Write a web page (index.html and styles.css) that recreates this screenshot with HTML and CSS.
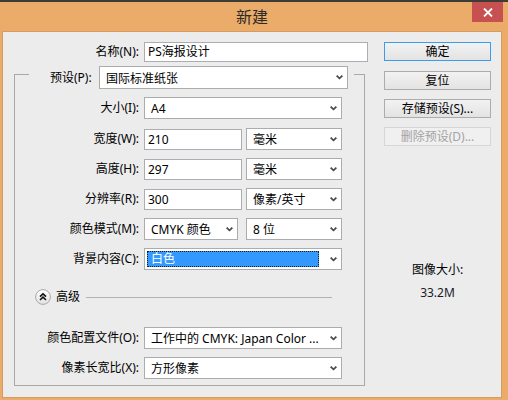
FILE: index.html
```
<!DOCTYPE html>
<html lang="zh-CN">
<head>
<meta charset="utf-8">
<title>新建</title>
<link rel="stylesheet" href="styles.css">
</head>
<body>
<div class="window">
  <div class="titlebar">
    <span class="title">新建</span>
    <div class="close">
      <svg width="10" height="9" viewBox="0 0 10 9"><path d="M1 0.5 L9 8.5 M9 0.5 L1 8.5" stroke="#fff" stroke-width="1.8" fill="none"/></svg>
    </div>
  </div>
  <div class="content">
    <div class="left">
      <div class="name-row">
        <span class="label">名称(N):</span>
        <div class="input">PS海报设计</div>
      </div>
      <div class="group">
        <div class="group-head">
          <span class="head-label">预设(P):</span>
          <div class="select preset"><span class="val">国际标准纸张</span><svg class="chev" width="7" height="5" viewBox="0 0 7 5"><polygon points="0,1.2 1.3,0 3.5,2.2 5.7,0 7,1.2 3.5,4.6" fill="#4a4a4a"/></svg></div>
        </div>
        <div class="row row-size">
          <span class="label">大小(I):</span>
          <div class="select span2"><span class="val">A4</span><svg class="chev" width="7" height="5" viewBox="0 0 7 5"><polygon points="0,1.2 1.3,0 3.5,2.2 5.7,0 7,1.2 3.5,4.6" fill="#4a4a4a"/></svg></div>
        </div>
        <div class="row">
          <span class="label">宽度(W):</span>
          <div class="input num">210</div>
          <div class="select"><span class="val">毫米</span><svg class="chev" width="7" height="5" viewBox="0 0 7 5"><polygon points="0,1.2 1.3,0 3.5,2.2 5.7,0 7,1.2 3.5,4.6" fill="#4a4a4a"/></svg></div>
        </div>
        <div class="row">
          <span class="label">高度(H):</span>
          <div class="input num">297</div>
          <div class="select"><span class="val">毫米</span><svg class="chev" width="7" height="5" viewBox="0 0 7 5"><polygon points="0,1.2 1.3,0 3.5,2.2 5.7,0 7,1.2 3.5,4.6" fill="#4a4a4a"/></svg></div>
        </div>
        <div class="row">
          <span class="label">分辨率(R):</span>
          <div class="input num">300</div>
          <div class="select"><span class="val">像素/英寸</span><svg class="chev" width="7" height="5" viewBox="0 0 7 5"><polygon points="0,1.2 1.3,0 3.5,2.2 5.7,0 7,1.2 3.5,4.6" fill="#4a4a4a"/></svg></div>
        </div>
        <div class="row">
          <span class="label">颜色模式(M):</span>
          <div class="select mode"><span class="val">CMYK 颜色</span><svg class="chev" width="7" height="5" viewBox="0 0 7 5"><polygon points="0,1.2 1.3,0 3.5,2.2 5.7,0 7,1.2 3.5,4.6" fill="#4a4a4a"/></svg></div>
          <div class="select"><span class="val">8 位</span><svg class="chev" width="7" height="5" viewBox="0 0 7 5"><polygon points="0,1.2 1.3,0 3.5,2.2 5.7,0 7,1.2 3.5,4.6" fill="#4a4a4a"/></svg></div>
        </div>
        <div class="row">
          <span class="label">背景内容(C):</span>
          <div class="select span2 focused"><span class="selection">白色</span><svg class="chev" width="7" height="5" viewBox="0 0 7 5"><polygon points="0,1.2 1.3,0 3.5,2.2 5.7,0 7,1.2 3.5,4.6" fill="#4a4a4a"/></svg></div>
        </div>
        <div class="advanced">
          <svg class="adv-icon" width="16" height="16" viewBox="0 0 16 16">
            <defs><linearGradient id="g" x1="0" y1="0" x2="0" y2="1"><stop offset="0" stop-color="#ffffff"/><stop offset="1" stop-color="#e2e2e2"/></linearGradient></defs>
            <circle cx="8" cy="8" r="7.4" fill="url(#g)" stroke="#a8a8a8" stroke-width="1"/>
            <path d="M5 7.6 L8 4.8 L11 7.6 M5 11 L8 8.2 L11 11" stroke="#111" stroke-width="1.6" fill="none"/>
          </svg>
          <span class="adv-text">高级</span>
          <span class="adv-line"></span>
        </div>
        <div class="row row-profile">
          <span class="label">颜色配置文件(O):</span>
          <div class="select span2"><span class="val">工作中的 CMYK: Japan Color ...</span><svg class="chev" width="7" height="5" viewBox="0 0 7 5"><polygon points="0,1.2 1.3,0 3.5,2.2 5.7,0 7,1.2 3.5,4.6" fill="#4a4a4a"/></svg></div>
        </div>
        <div class="row">
          <span class="label">像素长宽比(X):</span>
          <div class="select span2"><span class="val">方形像素</span><svg class="chev" width="7" height="5" viewBox="0 0 7 5"><polygon points="0,1.2 1.3,0 3.5,2.2 5.7,0 7,1.2 3.5,4.6" fill="#4a4a4a"/></svg></div>
        </div>
      </div>
    </div>
    <div class="right">
      <div class="btn default">确定</div>
      <div class="btn b2">复位</div>
      <div class="btn b3">存储预设(S)...</div>
      <div class="btn b3 disabled">删除预设(D)...</div>
      <div class="size-label">图像大小:</div>
      <div class="size-value">33.2M</div>
    </div>
  </div>
</div>
</body>
</html>
```
FILE: styles.css
```
* { box-sizing: border-box; }
html, body {
  margin: 0;
  padding: 0;
}
body {
  width: 508px;
  height: 400px;
  overflow: hidden;
  background: #EBAC6A;
  font-family: "Noto Sans", "Noto Sans CJK SC", sans-serif;
  font-size: 12px;
  color: #000;
}
.window {
  display: flex;
  flex-direction: column;
  height: 400px;
}
.titlebar {
  height: 31px;
  border-top: 2px solid #3f3b37;
  display: grid;
  grid-template-columns: 1fr auto 1fr;
  align-items: start;
}
.title {
  grid-column: 2;
  font-family: "Noto Sans CJK SC", sans-serif;
  font-size: 16px;
  line-height: 29px;
  color: #2b2b2b;
  padding-right: 4px;
}
.close {
  grid-column: 3;
  justify-self: end;
  width: 31px;
  height: 20px;
  margin-right: 5px;
  background: #C75050;
  display: flex;
  align-items: center;
  justify-content: center;
}
.content {
  flex: 1;
  margin: 0 6px 2px 2px;
  background: #ECECEC;
  border: 1px solid #D49C60;
  padding: 10px 0 0 11px;
  display: flex;
}
.left {
  width: 354px;
}
.label {
  font-family: "Noto Sans", "Noto Sans CJK SC", sans-serif;
  text-align: right;
  white-space: nowrap;
  line-height: 16px;
}
.name-row {
  display: grid;
  grid-template-columns: 125px 224px;
  column-gap: 5px;
  height: 20px;
  align-items: center;
}
.input {
  background: #fff;
  border: 1px solid #ABADB3;
  height: 20px;
  line-height: 18px;
  padding-left: 3px;
  white-space: nowrap;
}
.input.num {
  height: 21px;
  line-height: 19px;
}
.select {
  background: #fff;
  border: 1px solid #ACACAC;
  height: 22px;
  display: flex;
  align-items: center;
  padding: 0 4px 0 6px;
  white-space: nowrap;
}
.select .val {
  flex: 1;
  overflow: hidden;
}
.chev {
  flex: none;
  margin-left: 4px;
}
.group {
  margin-top: 12px;
  width: 351px;
  border: 1px solid #A9A9A9;
  padding-bottom: 6px;
}
.group-head {
  margin: -9px 0 0 14px;
  width: fit-content;
  background: #ECECEC;
  display: flex;
  align-items: center;
  padding: 0 6px 0 21px;
}
.head-label {
  width: 44px;
  margin-right: 5px;
  white-space: nowrap;
  line-height: 16px;
}
.select.preset {
  width: 249px;
  height: 23px;
}
.row {
  display: grid;
  grid-template-columns: 125px 98px 96px;
  column-gap: 4px;
  height: 22px;
  align-items: center;
  margin-top: 8px;
}
.row .label {
  padding-right: 1px;
}
.row-size { margin-top: 8px; }
.row-size + .row { margin-top: 9px; }
.span2 { grid-column: 2 / 4; }
.select.mode {
  width: 94px;
}
.select.focused {
  padding: 0 4px 0 2px;
}
.selection {
  flex: 1;
  height: 16px;
  line-height: 16px;
  background: #3399FF;
  color: #fff;
  padding-left: 4px;
  outline: 1px dotted #1a1a1a;
  outline-offset: -1px;
  margin-right: 11px;
}
.focused .chev { margin-left: 0; }
.advanced {
  display: flex;
  align-items: center;
  height: 16px;
  margin-top: 19px;
  padding-left: 20px;
  padding-right: 32px;
}
.adv-icon { flex: none; }
.adv-text {
  margin-left: 5px;
  font-size: 12px;
  line-height: 16px;
}
.adv-line {
  flex: 1;
  height: 1px;
  background: #B2B2B2;
  margin-left: 6px;
}
.row-profile { margin-top: 22px; }
.right {
  margin-left: 16px;
  width: 107px;
  display: flex;
  flex-direction: column;
}
.btn {
  height: 19px;
  border: 1px solid #ACACAC;
  background: linear-gradient(#F2F2F2, #E3E3E3);
  text-align: center;
  line-height: 17px;
  white-space: nowrap;
}
.btn.default {
  border-color: #3C9BEB;
}
.btn.b2 { margin-top: 10px; }
.btn.b3 { margin-top: 9px; }
.btn.disabled {
  background: #F0F0F0;
  border-color: #D6D6D6;
  color: #A3A3A3;
}
.size-label {
  margin-top: 116px;
  text-align: center;
  line-height: 16px;
}
.size-value {
  margin-top: 7px;
  text-align: center;
  line-height: 16px;
  color: #1a1a2a;
}
```
